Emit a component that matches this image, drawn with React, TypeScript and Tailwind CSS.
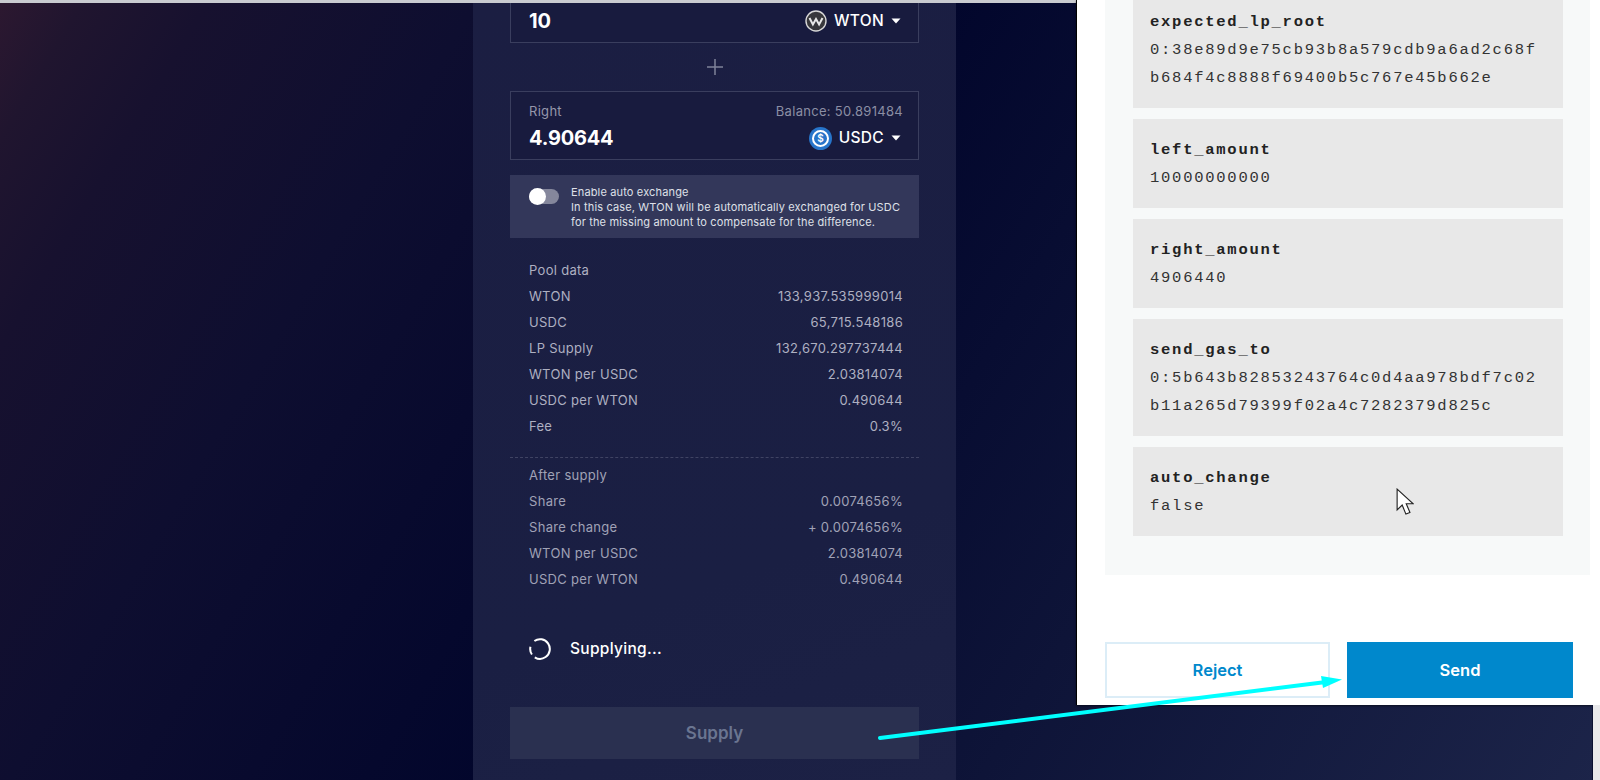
const sans = "font-['Inter','Liberation_Sans',sans-serif]";

const poolData = [
  ["WTON", "133,937.535999014"],
  ["USDC", "65,715.548186"],
  ["LP Supply", "132,670.297737444"],
  ["WTON per USDC", "2.03814074"],
  ["USDC per WTON", "0.490644"],
  ["Fee", "0.3%"],
];

const afterSupply = [
  ["Share", "0.0074656%"],
  ["Share change", "+ 0.0074656%"],
  ["WTON per USDC", "2.03814074"],
  ["USDC per WTON", "0.490644"],
];

const params = [
  { name: "expected_lp_root", lines: ["0:38e89d9e75cb93b8a579cdb9a6ad2c68f", "b684f4c8888f69400b5c767e45b662e"] },
  { name: "left_amount", lines: ["10000000000"] },
  { name: "right_amount", lines: ["4906440"] },
  { name: "send_gas_to", lines: ["0:5b643b82853243764c0d4aa978bdf7c02", "b11a265d79399f02a4c7282379d825c"] },
  { name: "auto_change", lines: ["false"] },
];

const Caret = () => (
  <svg width="10" height="6" viewBox="0 0 10 6" className="ml-[7px] mr-[2px]">
    <path d="M0.5 0.5h9L5 5.5z" fill="#fff" />
  </svg>
);

const WtonIcon = () => (
  <svg width="22" height="22" viewBox="0 0 22 22">
    <circle cx="11" cy="11" r="10" fill="#38383c" stroke="#d8d8d8" strokeWidth="1.400" />
    <path d="M4.500 8l3.400 6.500L11 9l3.100 5.500L17.500 8" fill="none" stroke="#e8e8e8" strokeWidth="2" />
  </svg>
);

const UsdcIcon = () => (
  <svg width="23" height="23" viewBox="0 0 23 23">
    <circle cx="11.500" cy="11.500" r="11.500" fill="#2775ca" />
    <circle cx="11.500" cy="11.500" r="7.500" fill="none" stroke="#fff" strokeWidth="2" />
    <text x="11.500" y="15" textAnchor="middle" fontSize="10" fontWeight="600" fill="#fff" fontFamily="Inter, sans-serif">$</text>
  </svg>
);

const Spinner = () => (
  <svg width="24" height="24" viewBox="0 0 24 24" className="shrink-0">
    <circle cx="12" cy="12" r="9.800" fill="none" stroke="#fff" strokeWidth="2" strokeDasharray="42 4 8 8" transform="rotate(-125 12 12)" />
  </svg>
);

const TokenBox = ({ label, balance, value, icon, token }: { label?: string; balance?: string; value: string; icon: React.ReactNode; token: string }) => (
  <div className="h-[69px] border border-[#3a3e5e] bg-[#181b3e] pl-[18px] pr-[15px] pt-[10px]">
    <div className="flex h-[19px] items-center justify-between text-[13px] tracking-[0.3px]">
      <span className="text-[#9597ab]">{label}</span>
      <span className="text-[#8b8ea4]">{balance}</span>
    </div>
    <div className="mt-[4px] flex h-[26px] items-center justify-between">
      <span className="text-[20px] font-bold tracking-[-0.2px] text-white">{value}</span>
      <div className="flex items-center">
        {icon}
        <span className="ml-[7px] text-[15.500px] font-medium tracking-[0.3px] text-white">{token}</span>
        <Caret />
      </div>
    </div>
  </div>
);

const DataRows = ({ title, rows, tone }: { title: string; rows: string[][]; tone: string }) => (
  <div className={`pl-[19px] pr-[16px] text-[13px] tracking-[0.3px] ${tone}`}>
    <div className="flex h-[26px] items-center">{title}</div>
    {rows.map(([k, v]) => (
      <div key={k} className="flex h-[26px] items-center justify-between">
        <span>{k}</span>
        <span>{v}</span>
      </div>
    ))}
  </div>
);

const SupplyPanel = () => (
  <div className="ml-[473px] flex h-full w-[483px] flex-col overflow-hidden bg-[linear-gradient(160deg,#1b1e42,#1a1f43_70%,#1c2145)] px-[37px]">
    <div className="-mt-[29px]">
      <TokenBox value="10" icon={<WtonIcon />} token="WTON" />
    </div>
    <div className="flex h-[48px] items-center justify-center">
      <svg width="18" height="18" viewBox="0 0 18 18">
        <path d="M9 1v16M1 9h16" stroke="#7f8299" strokeWidth="1.500" />
      </svg>
    </div>
    <TokenBox label="Right" balance="Balance: 50.891484" value="4.90644" icon={<UsdcIcon />} token="USDC" />

    <div className="mt-[15px] flex h-[63px] items-start bg-[#33375a] pl-[19px] pt-[10px] text-[11px] leading-[15px] tracking-[0.15px] text-[#dfe0e8]">
      <div className="relative mt-[4px] h-[15px] w-[30px] shrink-0 rounded-full bg-[#85879c]">
        <div className="absolute -top-px left-0 h-[17px] w-[17px] rounded-full bg-white" />
      </div>
      <div className="ml-[12px] whitespace-nowrap">
        Enable auto exchange
        <br />
        In this case, WTON will be automatically exchanged for USDC
        <br />
        for the missing amount to compensate for the difference.
      </div>
    </div>

    <div className="mt-[20px]">
      <DataRows title="Pool data" rows={poolData} tone="text-[#aeb0c1]" />
    </div>
    <div className="mt-[17px] border-t border-dashed border-[#3f4363]" />
    <div className="mt-[5px]">
      <DataRows title="After supply" rows={afterSupply} tone="text-[#a0a2b6]" />
    </div>

    <div className="mt-[44px] flex h-[24px] items-center pl-[18px]">
      <Spinner />
      <span className="ml-[18px] text-[15.500px] font-medium tracking-[0.3px] text-white">Supplying...</span>
    </div>

    <div className="mt-[46px] flex h-[52px] shrink-0 items-center justify-center bg-[#2a3050] pt-[2px] text-[17px] font-semibold text-[#6a7590]">
      Supply
    </div>
  </div>
);

const WalletModal = () => (
  <div className="absolute right-0 top-0 flex h-[705px] w-[524px] flex-col overflow-hidden border-l border-black bg-white shadow-[0_1px_2px_rgba(0,0,0,0.5)]">
    <div className="ml-[28px] mr-[10px] h-[575px] shrink-0 overflow-hidden bg-[#f7f9f9] pl-[28px] pr-[27px]">
      <div className="-mt-[9px] flex flex-col gap-[11px]">
        {params.map((p) => (
          <div key={p.name} className="bg-[#e8e8e8] pb-[16px] pl-[17px] pt-[17px] font-['Liberation_Mono',monospace] text-[15.500px] leading-[28px] tracking-[1.750px] text-[#333]">
            <div className="font-bold text-[#222]">{p.name}</div>
            {p.lines.map((l) => (
              <div key={l}>{l}</div>
            ))}
          </div>
        ))}
      </div>
    </div>
    <div className="ml-[28px] mt-[67px] flex gap-[17px]">
      <div className="flex h-[56px] w-[225px] items-center justify-center border-2 border-[#dcedf7] pt-[1px] text-[16.500px] font-semibold text-[#0088cc]">
        Reject
      </div>
      <div className="flex h-[56px] w-[226px] items-center justify-center bg-[#0088cc] pt-[1px] text-[16.500px] font-semibold text-white">
        Send
      </div>
    </div>
  </div>
);

export default function App() {
  return (
    <div className={`relative flex h-[780px] w-[1600px] flex-col overflow-hidden ${sans}`}>
      <div className="h-[3px] shrink-0 bg-[#c9cbd0]" />
      <div className="min-h-0 flex-1 bg-[linear-gradient(121deg,#2c1830_0%,#20152f_4%,#17112f_10%,#0e0e30_23%,#02062c_46%,#0e1438_70%,#1c2449_100%)]">
        <SupplyPanel />
      </div>
      <WalletModal />
      <div className="absolute bottom-0 right-0 top-[705px] w-[8px] border-l border-[#0a1030] bg-[#e8e8ea]" />

      {/* annotation arrow drawn over the screenshot */}
      <svg className="absolute left-0 top-0" width="1600" height="780" viewBox="0 0 1600 780">
        <path d="M880 738L1326 682" stroke="#00ffff" strokeWidth="4" strokeLinecap="round" />
        <path d="M1342 679.500L1321 676L1323 688z" fill="#00ffff" />
      </svg>

      {/* mouse pointer */}
      <svg className="absolute left-[1396px] top-[488px]" width="18" height="27" viewBox="0 0 16 24">
        <path d="M1 1v18.500l4.500-4.300 3.300 8 3.600-1.500-3.300-7.700h6.200z" fill="#fff" stroke="#222" strokeWidth="1" />
      </svg>
    </div>
  );
}
